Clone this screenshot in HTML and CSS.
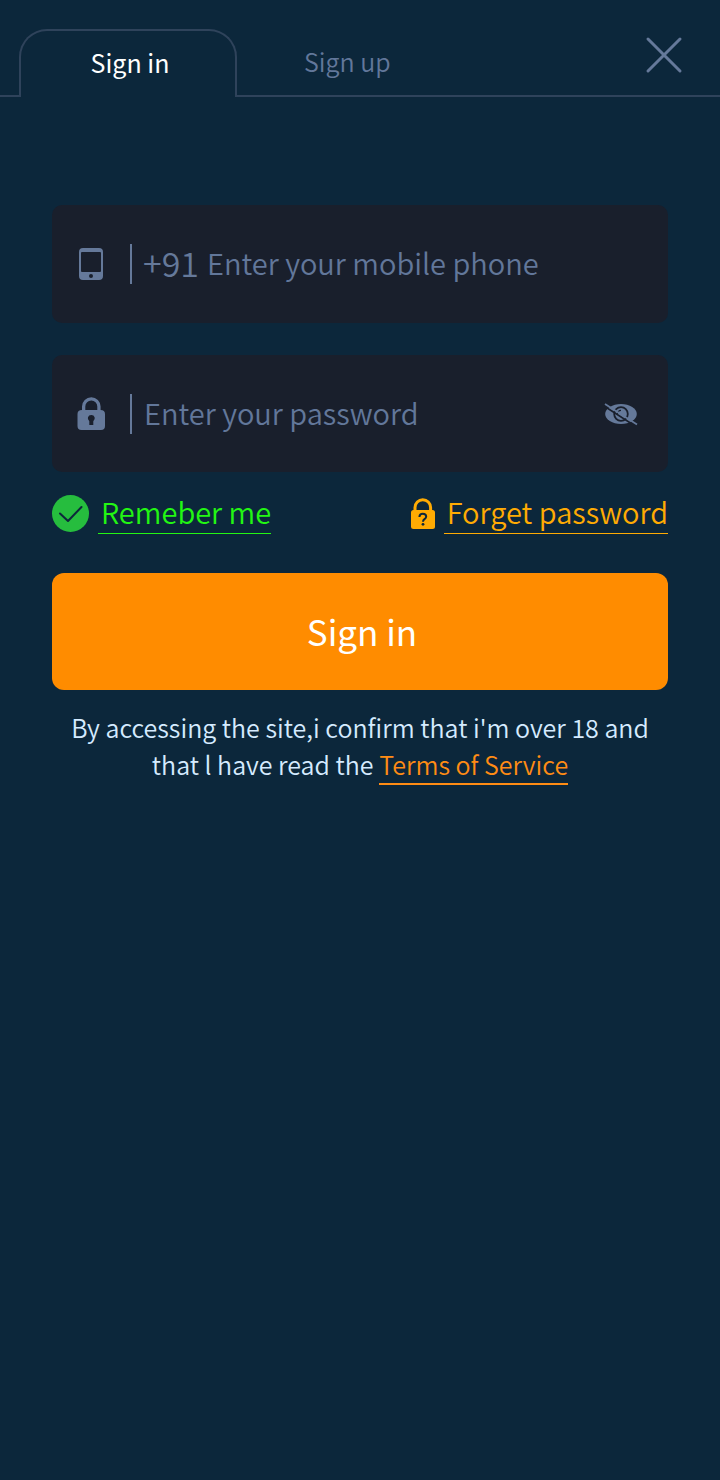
FILE: index.html
```html
<!DOCTYPE html>
<html lang="en">
<head>
<meta charset="utf-8">
<meta name="viewport" content="width=device-width, initial-scale=1">
<title>Sign in</title>
<link rel="stylesheet" href="styles.css">
</head>
<body>
<header class="tabs">
  <button class="tab tab-active" type="button">Sign in</button>
  <div class="tabs-rest">
    <button class="tab tab-idle" type="button">Sign up</button>
    <button class="close" type="button" aria-label="Close">
      <svg width="40" height="40" viewBox="0 0 40 40" fill="none" stroke="currentColor" stroke-width="3" stroke-linecap="round"><path d="M4 4l32 32M36 4L4 36"/></svg>
    </button>
  </div>
</header>
<main class="content">
  <form class="form">
    <div class="field">
      <label class="field-icon" for="phone" aria-label="Mobile phone">
        <svg width="30" height="34" viewBox="0 0 30 34" fill="currentColor" fill-rule="evenodd"><path d="M6 1h16a4 4 0 0 1 4 4v24a4 4 0 0 1-4 4H6a4 4 0 0 1-4-4V5a4 4 0 0 1 4-4zM5 5Q4 5 4 6v18q0 1 1 1h18q1 0 1-1V6q0-1-1-1zM14 27a2 2 0 1 0 0 4 2 2 0 0 0 0-4z"/></svg>
      </label>
      <span class="divider"></span>
      <span class="prefix">+91</span>
      <input class="input" id="phone" type="tel" placeholder="Enter your mobile phone">
    </div>
    <div class="field">
      <label class="field-icon" for="password" aria-label="Password">
        <svg width="30" height="34" viewBox="0 0 30 34" fill="currentColor" fill-rule="evenodd"><path d="M5 13V9.500a9.300 9.300 0 0 1 18.600 0V13q4.400 0 4.400 4v12q0 4-4 4H4.500q-4 0-4-4V17q0-4 4.500-4zM8.300 13h12V9.500a6 6 0 0 0-12 0zM14.300 18a3.400 3.400 0 0 0-2 6.200V28h4v-3.800a3.400 3.400 0 0 0-2-6.200z"/></svg>
      </label>
      <span class="divider"></span>
      <input class="input" id="password" type="password" placeholder="Enter your password">
      <button class="reveal" type="button" aria-label="Show password">
        <svg width="34" height="24" viewBox="0 0 34 24"><ellipse cx="17" cy="12" rx="15.800" ry="10" fill="currentColor"/><circle cx="17" cy="12" r="6.800" fill="none" stroke="#191f2c" stroke-width="1.800"/><path d="M13.400 12a3.600 3.600 0 0 1 3.600-3.600" fill="none" stroke="#191f2c" stroke-width="1.200"/><path d="M0 4l31 20" stroke="#191f2c" stroke-width="1.600"/><path d="M1 2l32 20.500" stroke="currentColor" stroke-width="1.800"/></svg>
      </button>
    </div>
    <div class="options">
      <div class="option">
        <span class="check">
          <input class="check-box" id="remember" type="checkbox" checked>
          <svg class="check-mark" viewBox="0 0 37 37" fill="none" stroke="#0d273b" stroke-width="2" stroke-linecap="round" stroke-linejoin="round"><path d="M8 18.500l8 7.500 13.500-14"/></svg>
        </span>
        <label class="option-text" for="remember">Remeber me</label>
      </div>
      <a class="option forgot" href="#forgot">
        <svg width="24" height="31" viewBox="0 0 24 31" fill="none" stroke="currentColor"><path d="M4 13V9.500a7.800 7.800 0 0 1 15.600 0V13" stroke-width="3"/><rect y="12" width="24" height="19" rx="2.500" fill="currentColor" stroke="none"/><path d="M8.400 19q.2-3.200 3.400-3.200t3.400 2.700q0 1.400-1.700 2.600-1.500 1.100-1.500 2.600" stroke="#0d273b" stroke-width="2"/><circle cx="12" cy="26.300" r="1.400" fill="#0d273b" stroke="none"/></svg>
        <span class="option-text">Forget password</span>
      </a>
    </div>
    <button class="submit" type="submit">Sign in</button>
  </form>
  <p class="terms">By accessing the site,i confirm that i'm over 18 and that l have read the <a class="terms-link" href="#terms">Terms of Service</a></p>
</main>
</body>
</html>
```
FILE: styles.css
```css
* { box-sizing: border-box; }

body {
  margin: 0;
  min-height: 100vh;
  background: #0c273b;
  color: #d5ebff;
  font-family: "Noto Sans CJK SC", "Noto Sans", sans-serif;
}

button, input { font-family: inherit; margin: 0; padding: 0; border: 0; background: none; }
button { cursor: pointer; }
svg { display: block; }

.tabs { display: flex; padding-top: 29px; }
.tabs::before { content: ""; width: 19px; border-bottom: 2px solid #2f435b; }

.tab { font-size: 25px; line-height: 38px; }

.tab-active {
  width: 218px;
  height: 68px;
  padding: 0 0 4px 4px;
  border: 2px solid #2f435b;
  border-bottom: 0;
  border-radius: 28px 28px 0 0;
  color: #fff;
}

.tabs-rest {
  flex: 1;
  display: flex;
  align-items: center;
  justify-content: space-between;
  padding: 0 36px 2px 67px;
  border-bottom: 2px solid #2f435b;
}

.tab-idle { color: #62779a; font-weight: 350; }
.close { color: #65799a; padding-bottom: 12px; }

.content { padding: 108px 52px 40px; }
.form { display: flex; flex-direction: column; }

.field {
  display: flex;
  align-items: center;
  height: 118px;
  padding: 0 30px 0 25px;
  border-radius: 10px;
  background: #191f2c;
  color: #65799a;
}

.field + .field { height: 117px; margin-top: 32px; }
.field-icon { width: 53px; }
.divider { width: 2px; height: 40px; background: currentColor; }
.prefix { padding: 0 0 2px 11px; font-size: 34px; line-height: 48px; font-weight: 350; }

.input {
  flex: 1;
  min-width: 0;
  height: 60px;
  padding: 0 0 4px 12px;
  outline: 0;
  color: inherit;
  font-size: 29px;
  font-weight: 350;
}

.prefix + .input { padding-left: 8px; }
.input::placeholder { color: #62779a; opacity: 1; }
.reveal { color: #65799a; }

.options {
  display: flex;
  justify-content: space-between;
  padding: 20px 0 39px;
}

.option { display: flex; align-items: center; gap: 9px; color: #23f613; text-decoration: none; }
.option-text { height: 42px; padding-left: 3px; border-bottom: 1px solid; font-size: 29px; line-height: 39px; font-weight: 350; }
.forgot { color: #ffab03; }

.check { position: relative; width: 37px; height: 37px; }
.check-box { display: block; appearance: none; width: 37px; height: 37px; border-radius: 50%; background: #26bd3e; }
.check-mark { position: absolute; inset: 0; pointer-events: none; }

.submit {
  height: 117px;
  padding: 0 0 2px 4px;
  border-radius: 12px;
  background: #ff8c00;
  color: #fff;
  font-size: 35px;
}

.terms { margin: 19px 0 0; text-align: center; font-size: 25px; line-height: 37px; font-weight: 350; }
.terms-link { display: inline-block; border-bottom: 2px solid; color: #ff8c14; text-decoration: none; }
```
